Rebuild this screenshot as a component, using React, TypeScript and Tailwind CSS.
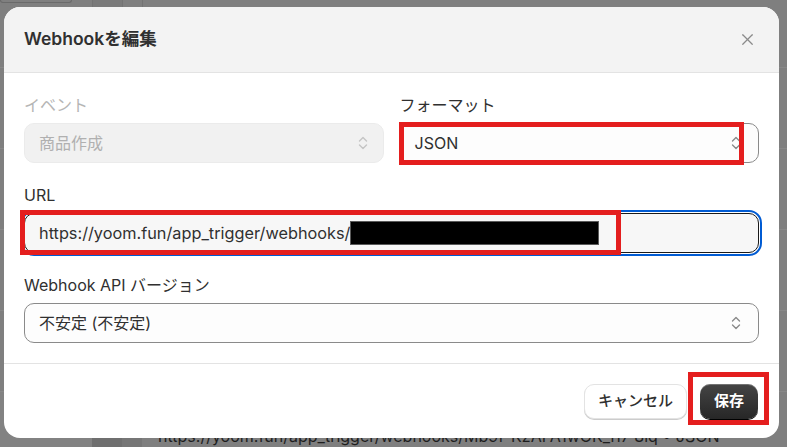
import { X } from "lucide-react";

const font = { fontFamily: 'Inter, "Noto Sans CJK JP", sans-serif' };

const SelectIcon = ({ muted = false }: { muted?: boolean }) => (
  <svg
    width="12"
    height="20"
    viewBox="0 0 12 20"
    fill="none"
    stroke={muted ? "#c4c4c4" : "#8a8a8a"}
    strokeWidth="1.4"
    strokeLinecap="round"
    strokeLinejoin="round"
  >
    <path d="M2.5 8 L6 4.5 L9.5 8" />
    <path d="M2.5 12 L6 15.5 L9.5 12" />
  </svg>
);

const Field = ({
  label,
  muted = false,
  children,
}: {
  label: string;
  muted?: boolean;
  children: React.ReactNode;
}) => (
  <div className="flex flex-col gap-[6px]">
    <span
      className={`text-[16px] leading-[24px] ${
        muted ? "text-[#b5b5b5]" : "text-[#303030]"
      }`}
    >
      {label}
    </span>
    {children}
  </div>
);

export default function App() {
  return (
    <div
      className="relative h-[447px] w-full overflow-hidden bg-[#7f7f7f]"
      style={font}
    >
      {/* dimmed page behind the dialog */}
      <div className="flex h-full flex-col">
        <div className="flex h-[68px] border-b border-[#888888]">
          <div className="w-[92px]">
            <div className="h-[3px] w-[72px] rounded-b-[6px] border border-t-0 border-[#6a6a6a]" />
          </div>
          <div className="w-[30px] border-l border-[#737373] bg-[#7a7a7a]" />
          <div className="w-[20px] border-l border-[#737373]" />
          <div className="flex-1 border-l border-[#737373]" />
        </div>
        <div className="h-[81px] border-b border-[#888888]" />
        <div className="h-[81px] border-b border-[#888888]" />
        <div className="h-[81px] border-b border-[#888888]" />
        <div className="h-[81px] border-b border-[#888888]" />
        <div className="flex flex-1">
          <div className="w-[92px] bg-[#828282]" />
          <div className="w-[30px] bg-[#6f6f6f]" />
          <div className="w-[20px] bg-[#767676]" />
          <div className="flex-1 pl-4 pt-[34px] text-[16px] leading-[20px] text-[#1e1e1e]">
            https://yoom.fun/app_trigger/webhooks/Mb9f-KzAFA1wOK_ri7 8iq • JSON
          </div>
        </div>
      </div>

      {/* edit dialog */}
      <div className="absolute left-[4px] top-[7px] flex h-[431px] w-[775px] flex-col overflow-hidden rounded-[16px] bg-white">
        <div className="flex h-[66px] items-center justify-between border-b border-[#e3e3e3] bg-[#f3f3f3] pl-5 pr-[22px]">
          <span className="text-[17.5px] font-semibold text-[#303030]">
            Webhookを編集
          </span>
          <X size={19} strokeWidth={1.5} color="#8a8a8a" />
        </div>

        <div className="flex flex-col gap-5 border-b border-[#e3e3e3] p-5">
          <div className="grid grid-cols-2 gap-4">
            <Field label="イベント" muted>
              <div className="flex h-10 items-center justify-between rounded-[10px] border border-[#ebebeb] bg-[#f1f1f1] pl-[14px] pr-[14px] text-[16px] text-[#b0b0b0]">
                <span>商品作成</span>
                <SelectIcon muted />
              </div>
            </Field>
            <Field label="フォーマット">
              <div className="flex h-10 items-center justify-between rounded-[10px] border border-[#8a8a8a] bg-[#fdfdfd] pl-[14px] pr-[16px] text-[16px] text-[#303030]">
                <span>JSON</span>
                <SelectIcon />
              </div>
            </Field>
          </div>

          <Field label="URL">
            <div className="flex h-10 items-center rounded-[10px] border border-[#1a1a1a] bg-[#f7f7f7] pl-[14px] text-[16.3px] text-[#303030] outline-2 outline-offset-1 outline-[#005bd3]">
              <span>https://yoom.fun/app_trigger/webhooks/</span>
              <span className="inline-block h-[24px] w-[249px] border border-[#5a5a5a] bg-black" />
            </div>
          </Field>

          <Field label="Webhook API バージョン">
            <div className="flex h-10 items-center justify-between rounded-[10px] border border-[#8a8a8a] bg-[#fdfdfd] pl-[14px] pr-[16px] text-[16px] text-[#303030]">
              <span>不安定 (不安定)</span>
              <SelectIcon />
            </div>
          </Field>
        </div>

        <div className="flex flex-1 items-center justify-end gap-[13px] pr-[21px]">
          <button className="h-[35px] rounded-[10px] border border-[#e3e3e3] bg-white px-[13px] text-[15px] font-medium text-[#303030] shadow-[0_1px_0_#cccccc]">
            キャンセル
          </button>
          <button className="h-[35px] rounded-[10px] bg-gradient-to-b from-[#454545] to-[#272727] px-[14px] text-[15px] font-bold text-white shadow-[inset_0_1px_0_rgba(255,255,255,0.25),0_1px_0_#000]">
            保存
          </button>
        </div>
      </div>

      {/* red highlight boxes */}
      <div className="absolute left-[399px] top-[122px] h-[43px] w-[345px] border-[5px] border-[#e41e1e]" />
      <div className="absolute left-[20px] top-[210px] h-[45px] w-[601px] border-[5px] border-[#e41e1e]" />
      <div className="absolute left-[688px] top-[372px] h-[53px] w-[81px] border-[5px] border-[#e41e1e]" />
    </div>
  );
}
